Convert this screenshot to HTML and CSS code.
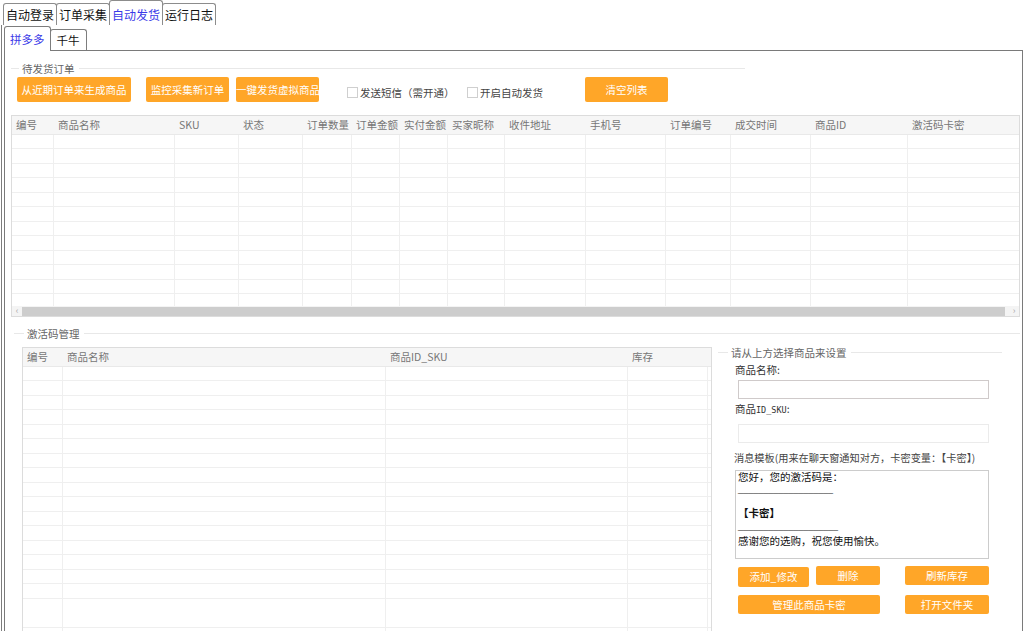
FILE: index.html
```html
<!DOCTYPE html>
<html lang="zh-CN">
<head>
<meta charset="utf-8">
<title>自动发货</title>
<link rel="stylesheet" href="styles.css">
</head>
<body>
<div class="app">
  <div class="top-tabs">
    <div class="tab">自动登录</div>
    <div class="tab">订单采集</div>
    <div class="tab active">自动发货</div>
    <div class="tab">运行日志</div>
  </div>
  <div class="outer">
    <div class="sub-tabs">
      <div class="stab active">拼多多</div>
      <div class="stab">千牛</div>
    </div>
    <div class="inner">
      <div class="gtitle g1">待发货订单</div>
      <div class="btn-row">
        <div class="btn b-gen">从近期订单来生成商品</div>
        <div class="btn b-mon">监控采集新订单</div>
        <div class="btn b-one">一键发货虚拟商品</div>
        <label class="cb cb1"><span class="box"></span>发送短信（需开通）</label>
        <label class="cb cb2"><span class="box"></span>开启自动发货</label>
        <div class="btn b-clr">清空列表</div>
      </div>

      <div class="tbl t1">
        <div class="thead">
          <div class="th w42">编号</div>
          <div class="th w121">商品名称</div>
          <div class="th w64">SKU</div>
          <div class="th w64">状态</div>
          <div class="th w49">订单数量</div>
          <div class="th w48">订单金额</div>
          <div class="th w48">实付金额</div>
          <div class="th w57">买家昵称</div>
          <div class="th w81">收件地址</div>
          <div class="th w80">手机号</div>
          <div class="th w65">订单编号</div>
          <div class="th w80">成交时间</div>
          <div class="th w97">商品ID</div>
          <div class="th rest">激活码卡密</div>
        </div>
        <div class="tbody">
          <div class="col w42"></div><div class="col w121"></div><div class="col w64"></div><div class="col w64"></div><div class="col w49"></div><div class="col w48"></div><div class="col w48"></div><div class="col w57"></div><div class="col w81"></div><div class="col w80"></div><div class="col w65"></div><div class="col w80"></div><div class="col w97"></div><div class="col rest"></div>
        </div>
        <div class="hscroll">
          <span class="arr">&lsaquo;</span>
          <div class="thumb"></div>
          <span class="arr">&rsaquo;</span>
        </div>
      </div>

      <div class="gtitle g2">激活码管理</div>

      <div class="lower">
        <div class="tbl t2">
          <div class="thead">
            <div class="th w40">编号</div>
            <div class="th w323">商品名称</div>
            <div class="th w242">商品ID_SKU</div>
            <div class="th w80">库存</div>
            <div class="th rest"></div>
          </div>
          <div class="tbody">
            <div class="col w40"></div><div class="col w323"></div><div class="col w242"></div><div class="col w80"></div><div class="col rest"></div>
          </div>
        </div>

        <div class="panel">
          <div class="gtitle g3">请从上方选择商品来设置</div>
          <div class="lbl l1">商品名称:</div>
          <div class="input"></div>
          <div class="lbl l2">商品<span class="mono">ID_SKU</span>:</div>
          <div class="input disabled"></div>
          <div class="lbl l3">消息模板(用来在聊天窗通知对方，卡密变量：【卡密】)</div>
          <div class="textarea">
            <div class="ln t1l">您好，您的激活码是：</div>
            <div class="ln us u1">___________________</div>
            <div class="ln t3l"><b>【卡密】</b></div>
            <div class="ln us u2">____________________</div>
            <div class="ln t5l">感谢您的选购，祝您使用愉快。</div>
          </div>
          <div class="prow r1">
            <div class="btn p-add">添加_修改</div>
            <div class="btn p-del">删除</div>
            <div class="btn p-ref">刷新库存</div>
          </div>
          <div class="prow r2">
            <div class="btn p-man">管理此商品卡密</div>
            <div class="btn p-open">打开文件夹</div>
          </div>
        </div>
      </div>
    </div>
  </div>
</div>
</body>
</html>
```

FILE: styles.css
```css
* { box-sizing: border-box; }
html, body { margin: 0; padding: 0; background: #fff; }
body {
  width: 1024px;
  height: 631px;
  overflow: hidden;
  font-family: "Noto Sans CJK SC", "Microsoft YaHei", sans-serif;
  font-size: 11px;
  color: #222;
}
.app { width: 1024px; height: 631px; overflow: hidden; }

/* top tabs */
.top-tabs {
  height: 25px;
  display: flex;
  align-items: flex-end;
  padding-left: 3px;
}
.tab {
  height: 22px;
  line-height: 21px;
  padding: 0 2px;
  font-size: 12px;
  color: #111;
  border: 1px solid #8c8c8c;
  border-bottom: none;
  border-radius: 3px 3px 0 0;
  margin-right: -1px;
  background: #fff;
}
.tab.active {
  height: 25px;
  line-height: 27px;
  color: #3a3ae8;
  position: relative;
  z-index: 1;
}

/* outer page */
.outer {
  margin-left: 1px;
  border-left: 1px solid #7d7d7d;
  padding-left: 2px;
  height: 606px;
}
.sub-tabs {
  height: 25px;
  display: flex;
  align-items: flex-end;
}
.stab {
  height: 21px;
  line-height: 20px;
  padding: 0 6px;
  font-size: 11.5px;
  color: #111;
  border: 1px solid #7d7d7d;
  border-bottom: none;
  border-radius: 3px 3px 0 0;
  margin-right: -1px;
  background: #fff;
}
.stab.active {
  height: 25px;
  line-height: 25px;
  padding: 0 5px;
  color: #3a3ae8;
  position: relative;
  z-index: 1;
  margin-bottom: -1px;
}
.inner {
  width: 1019px;
  height: 600px;
  border: 1px solid #7a7a7a;
  border-bottom: none;
  padding: 0 2px 0 6px;
}

/* group titles */
.gtitle {
  display: flex;
  align-items: center;
  height: 14px;
  font-size: 10.5px;
  color: #666;
  white-space: nowrap;
}
.gtitle::before {
  content: "";
  width: 8px;
  border-top: 1px solid #e8e8e8;
  margin-right: 3px;
}
.gtitle::after {
  content: "";
  flex: 1;
  border-top: 1px solid #e8e8e8;
  margin-left: 4px;
}
.g1 { margin-top: 10px; width: 734px; }
.g2 { margin-top: 9px; margin-left: 3px; }
.g2::before { width: 10px; }
.g3 { height: 10px; margin-top: 0; }
.g3::before { width: 10px; }

/* buttons */
.btn {
  background: #ffa628;
  color: #fff;
  font-size: 10.5px;
  text-align: center;
  border-radius: 2px;
  white-space: nowrap;
}
.btn-row {
  display: flex;
  align-items: center;
  height: 25px;
  margin-top: 2px;
  padding-left: 6px;
}
.btn-row .btn { height: 25px; line-height: 25px; }
.b-gen { width: 114px; }
.b-mon { width: 83px; margin-left: 15px; }
.b-one { width: 83px; margin-left: 7px; }
.cb {
  display: flex;
  align-items: center;
  font-size: 10.5px;
  color: #444;
  margin-top: 6px;
  white-space: nowrap;
}
.cb .box {
  width: 11px;
  height: 11px;
  border: 1px solid #cfcfcf;
  background: #fff;
  margin-right: 2px;
}
.cb1 { width: 120px; margin-left: 28px; }
.cb2 { width: 118px; }
.b-clr { width: 83px; }

/* tables */
.tbl {
  border: 1px solid #dcdcdc;
  background: #fff;
  overflow: hidden;
}
.thead {
  display: flex;
  height: 19px;
  background: #f6f6f6;
  border-bottom: 1px solid #e9e9e9;
}
.th {
  flex: none;
  padding-left: 4px;
  font-size: 10.5px;
  line-height: 18px;
  color: #777;
  overflow: hidden;
  white-space: nowrap;
}
.tbody {
  display: flex;
  background-image: repeating-linear-gradient(to bottom, transparent 0, transparent 13.5px, #efefef 13.5px, #efefef 14.5px);
}
.col {
  flex: none;
  height: 100%;
  border-right: 1px solid #efefef;
}
.th.rest, .col.rest { flex: 1; border-right: none; }
.w40 { width: 40px; } .w42 { width: 42px; } .w48 { width: 48px; } .w49 { width: 49px; }
.w57 { width: 57px; } .w64 { width: 64px; } .w65 { width: 65px; } .w80 { width: 80px; }
.w81 { width: 81px; } .w97 { width: 97px; } .w121 { width: 121px; } .w242 { width: 242px; }
.w323 { width: 323px; }

.t1 { margin-top: 13px; width: 1009px; height: 202px; }
.t1 .tbody { height: 171px; }
.hscroll {
  display: flex;
  align-items: center;
  height: 10px;
  background: #f4f4f4;
}
.hscroll .arr {
  width: 10px;
  font-size: 9px;
  line-height: 10px;
  color: #aaa;
  text-align: center;
}
.hscroll .thumb {
  flex: 1;
  height: 9px;
  background: #cdcdcd;
  margin-right: 4px;
}

/* lower section */
.lower {
  display: flex;
  margin-top: 7px;
}
.t2 {
  margin-left: 11px;
  width: 690px;
  height: 300px;
}
.t2 .tbody { height: 280px; }

.panel {
  width: 284px;
  margin-left: 6px;
}
.lbl {
  font-size: 10.5px;
  color: #333;
  height: 14px;
  line-height: 14px;
  padding-left: 17px;
  white-space: nowrap;
}
.lbl .mono { font-family: "DejaVu Sans Mono", "Liberation Mono", monospace; font-size: 8.5px; }
.l1 { margin-top: 6px; }
.l2 { margin-top: 3px; }
.l3 { margin-top: 8px; padding-left: 16px; color: #444; font-size: 10.2px; }
.input {
  margin-left: 20px;
  margin-top: 3px;
  width: 251px;
  height: 19px;
  border: 1px solid #cfcaca;
  background: #fff;
}
.input.disabled { margin-top: 8px; border-color: #ebebeb; }
.textarea {
  margin-left: 17px;
  margin-top: 5px;
  width: 254px;
  height: 89px;
  border: 1px solid #cccccc;
  padding-left: 2px;
  color: #111;
  font-size: 10.5px;
}
.ln { white-space: nowrap; }
.t1l { height: 11px; line-height: 11px; }
.us {
  font-family: "Liberation Sans", Arial, sans-serif;
  font-size: 9px;
  color: #444;
  line-height: 10px;
  height: 10px;
  margin-top: 2px;
}
.t3l { margin-top: 12px; height: 13px; line-height: 13px; }
.t3l b { font-weight: 700; }
.u2 { margin-top: 2px; }
.t5l { margin-top: 3px; height: 13px; line-height: 13px; }

.prow { display: flex; margin-left: 20px; }
.prow .btn { height: 19px; line-height: 19px; }
.r1 { margin-top: 7px; align-items: flex-start; }
.r2 { margin-top: 8px; }
.p-add { width: 71px; margin-top: 1px; height: 20px !important; line-height: 20px !important; }
.p-del { width: 64px; margin-left: 7px; }
.p-ref { width: 84px; margin-left: 25px; }
.p-man { width: 142px; }
.p-open { width: 84px; margin-left: 25px; }
```
